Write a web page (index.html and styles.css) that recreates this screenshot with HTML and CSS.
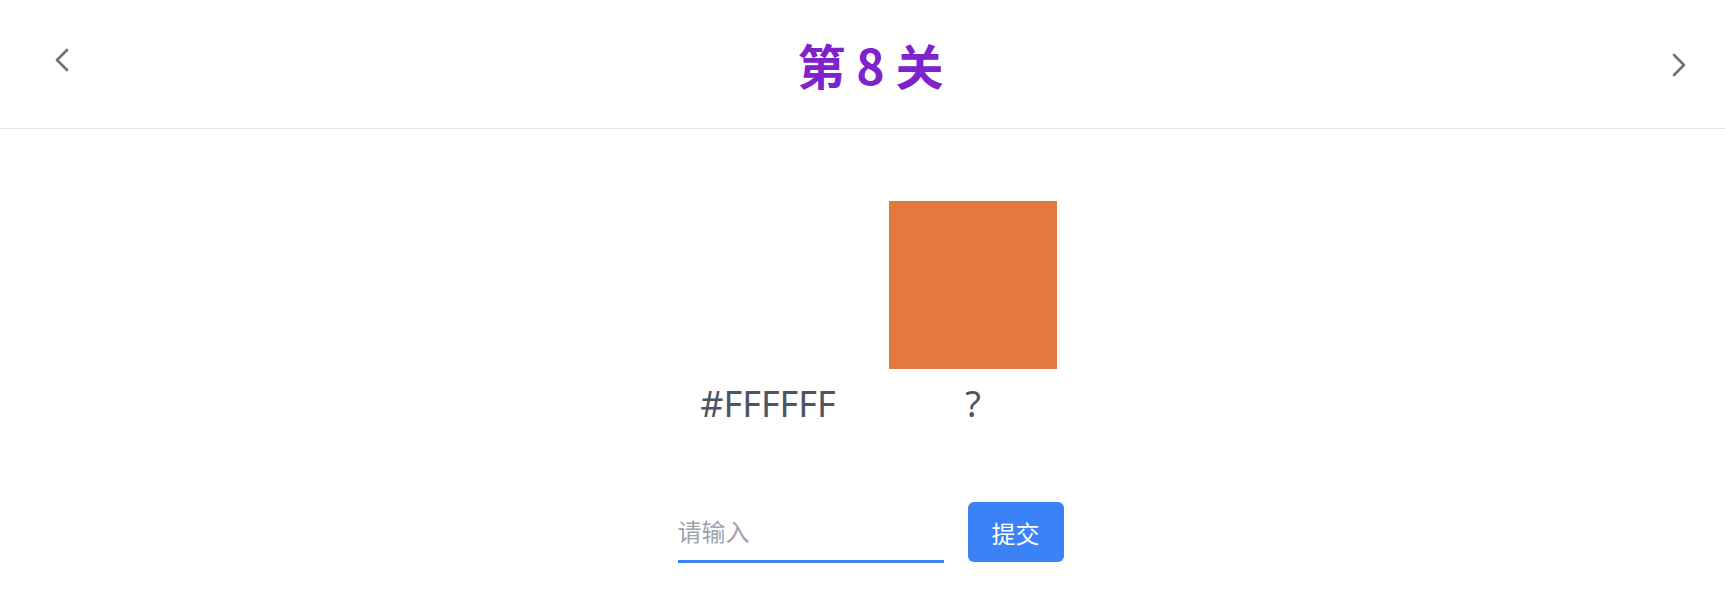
FILE: index.html
```html
<!DOCTYPE html>
<html lang="zh">
<head>
<meta charset="utf-8">
<title>第 8 关</title>
<link rel="stylesheet" href="styles.css">
</head>
<body>
<div class="page">
  <header class="header">
    <button class="nav nav-prev" aria-label="上一关">
      <svg width="32" height="32" viewBox="0 0 24 24" fill="none" stroke="currentColor" stroke-width="2" stroke-linecap="round" stroke-linejoin="round"><path d="M15.75 19.5L8.25 12l7.5-7.5"/></svg>
    </button>
    <h1 class="title">第 8 关</h1>
    <button class="nav nav-next" aria-label="下一关">
      <svg width="32" height="32" viewBox="0 0 24 24" fill="none" stroke="currentColor" stroke-width="2" stroke-linecap="round" stroke-linejoin="round"><path d="M8.25 4.5l7.5 7.5-7.5 7.5"/></svg>
    </button>
  </header>
  <main class="main">
    <div class="colors">
      <div class="color">
        <div class="swatch swatch-white"></div>
        <div class="label">#FFFFFF</div>
      </div>
      <div class="color">
        <div class="swatch swatch-orange"></div>
        <div class="label">?</div>
      </div>
    </div>
    <form class="answer">
      <input class="input" type="text" placeholder="请输入">
      <button class="submit" type="button">提交</button>
    </form>
  </main>
</div>
</body>
</html>
```
FILE: styles.css
```css
* { box-sizing: border-box; }
html, body { margin: 0; padding: 0; background: #fff; }
body {
  font-family: "Noto Sans", "Noto Sans CJK SC", sans-serif;
  color: #4b5563;
  overflow: hidden;
}
.page { width: 100%; height: 590px; }
.header {
  height: 129px;
  border-bottom: 1px solid #e5e7eb;
  display: flex;
  align-items: center;
  justify-content: space-between;
  padding: 0 30px 0 46px;
}
.nav {
  width: 32px;
  height: 32px;
  padding: 0;
  border: 0;
  background: none;
  color: #6b7280;
  display: flex;
  cursor: pointer;
}
.nav-prev { margin-top: -9px; }
.nav-next { margin-top: 1px; }
.title {
  margin: 0;
  font-family: "Noto Sans CJK SC", sans-serif;
  font-size: 48px;
  line-height: 1;
  font-weight: 700;
  color: #7e22ce;
}
.main {
  padding: 72px 0 0 16px;
  display: flex;
  flex-direction: column;
  align-items: center;
}
.colors {
  display: flex;
  gap: 37px;
}
.color {
  width: 168px;
  display: flex;
  flex-direction: column;
  align-items: center;
}
.swatch { width: 168px; height: 168px; }
.swatch-white { background: #ffffff; }
.swatch-orange { background: #e27a40; }
.label {
  margin-top: 15px;
  font-size: 36px;
  line-height: 40px;
  color: #4b5563;
}
.answer {
  margin-top: 77px;
  display: flex;
  align-items: center;
  gap: 24px;
}
.input {
  width: 266px;
  height: 62px;
  border: 0;
  border-bottom: 3px solid #3b82f6;
  padding: 0;
  font-family: "Noto Sans CJK SC", sans-serif;
  font-size: 24px;
  color: #374151;
  outline: none;
  background: transparent;
}
.input::placeholder { color: #9ca3af; }
.submit {
  width: 96px;
  height: 60px;
  border: 0;
  border-radius: 6px;
  background: #3b82f6;
  color: #fff;
  font-family: "Noto Sans CJK SC", sans-serif;
  font-size: 24px;
  padding: 0;
  cursor: pointer;
}
```
